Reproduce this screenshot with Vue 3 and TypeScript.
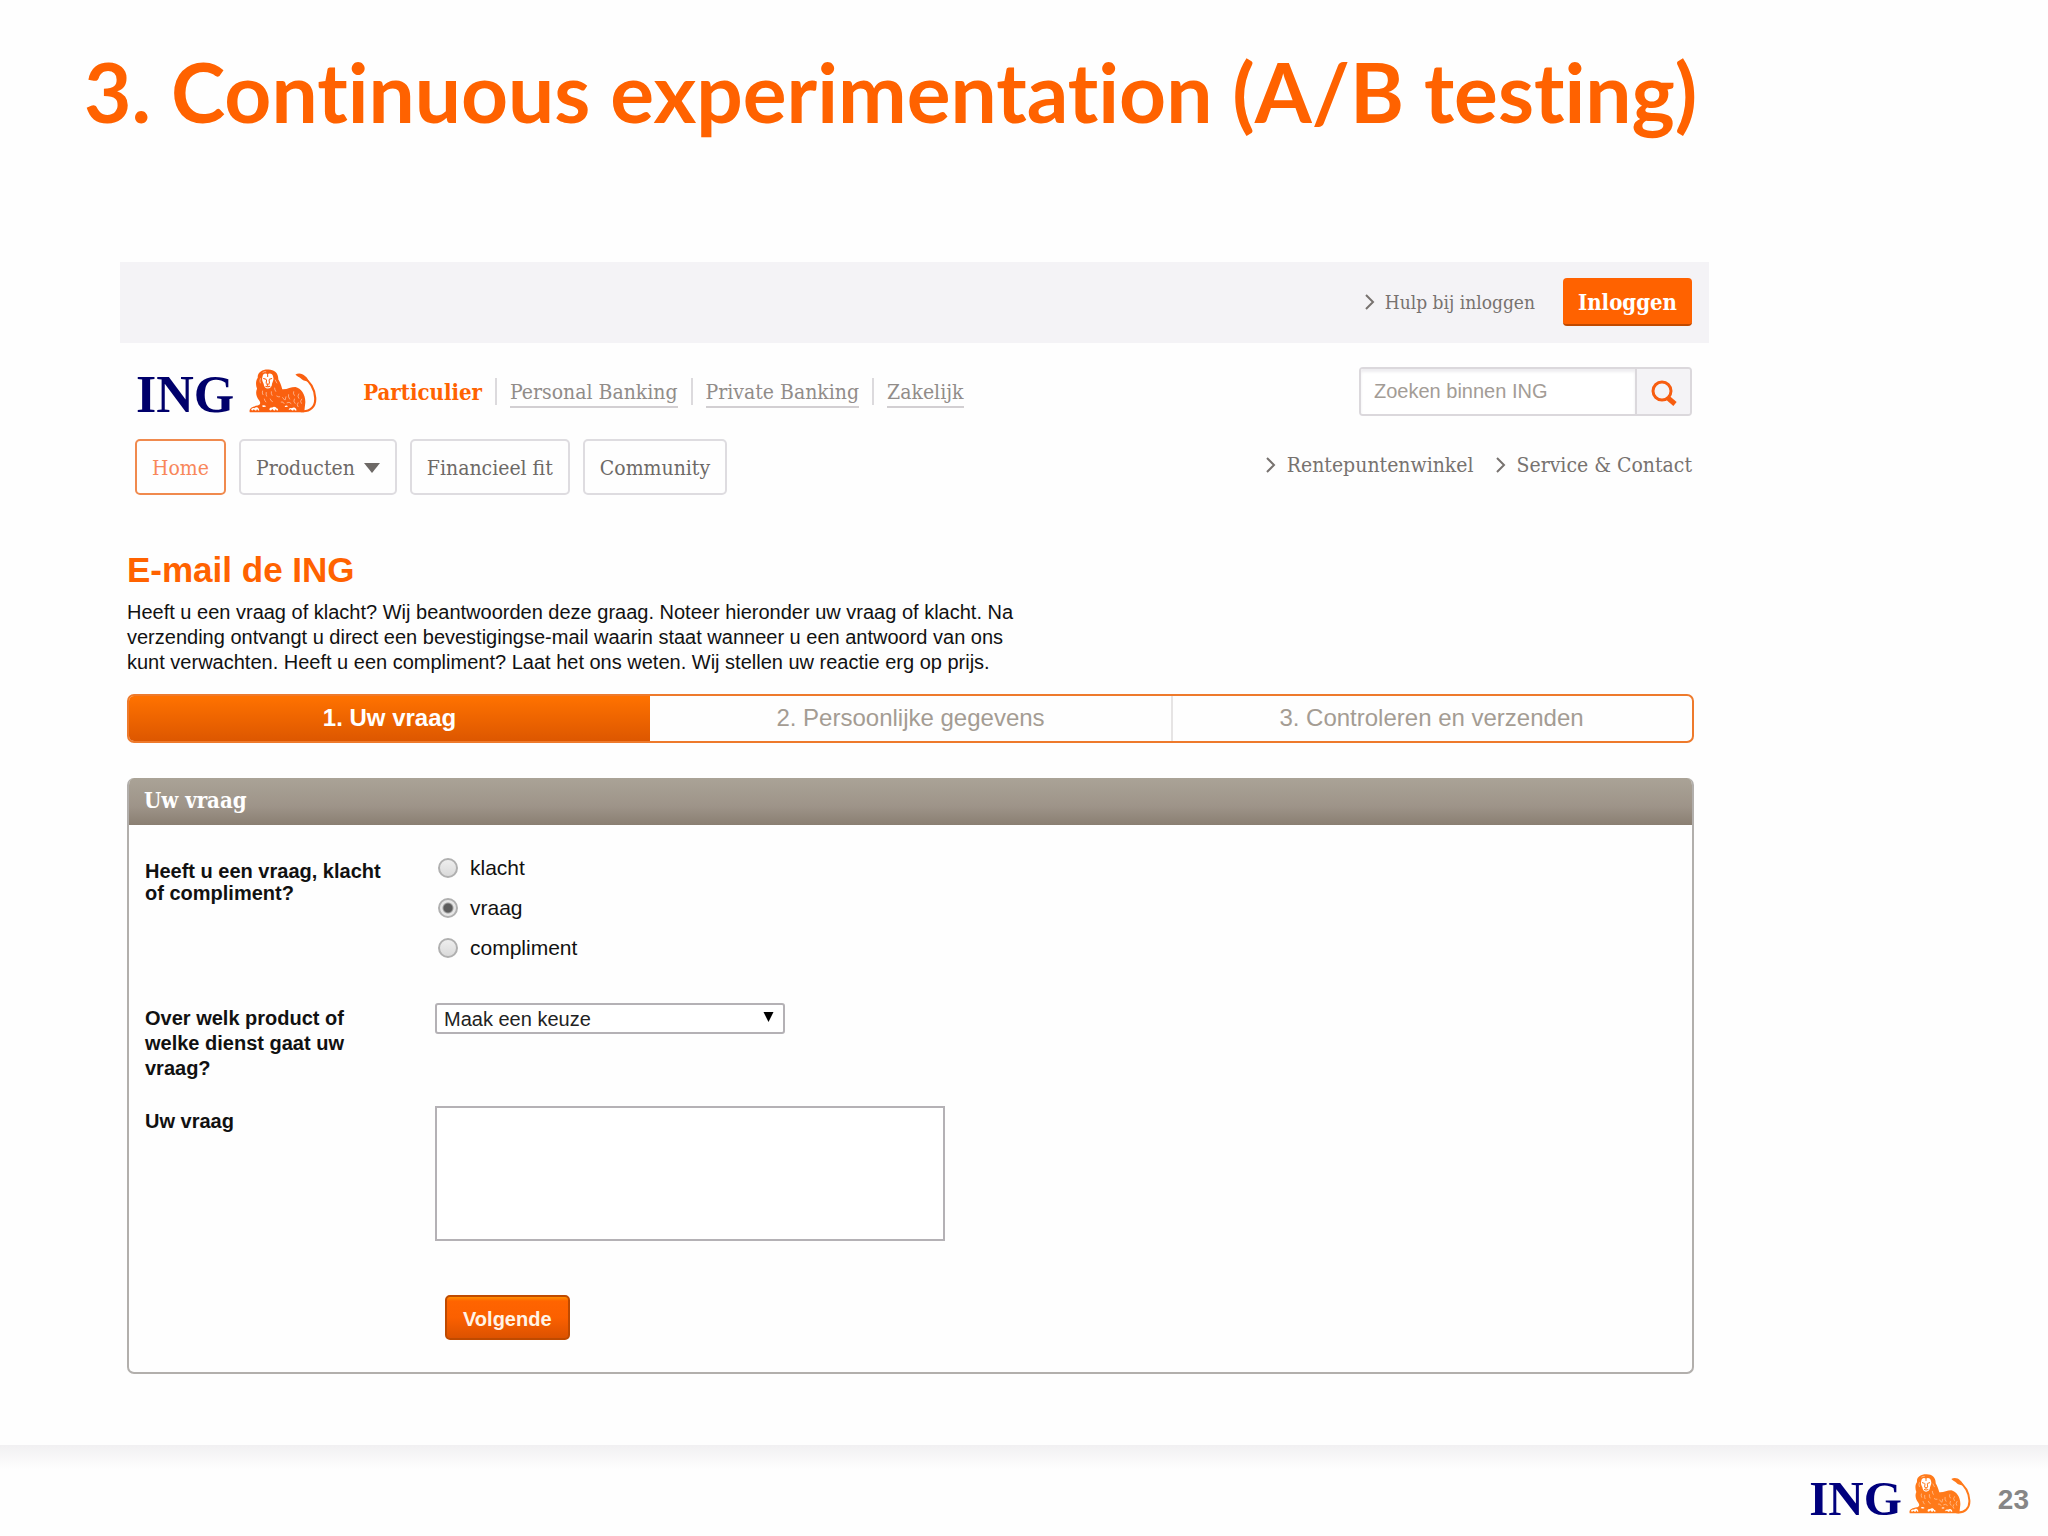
<script setup lang="ts">
import { ref } from 'vue'

interface Segment { label: string; active: boolean }

const segments: Segment[] = [
  { label: 'Particulier', active: true },
  { label: 'Personal Banking', active: false },
  { label: 'Private Banking', active: false },
  { label: 'Zakelijk', active: false },
]

const services: string[] = ['Rentepuntenwinkel', 'Service & Contact']
const steps: string[] = ['1. Uw vraag', '2. Persoonlijke gegevens', '3. Controleren en verzenden']
const kinds: string[] = ['klacht', 'vraag', 'compliment']

const kind = ref('vraag')
const product = ref('')
const question = ref('')
const search = ref('')
</script>

<template>
  <div class="slide">
    <svg class="sprite" aria-hidden="true">
      <symbol id="lion" viewBox="0 0 186 120">
        <path fill="currentColor" d="M24 24C22 8 38 0 53 1C70 1 81 12 80 28C85 36 88 44 91 55C104 56 114 49 127 49C143 53 155 70 154 92L151 118H2C-1 108 8 102 24 100C32 97 32 92 28 86C20 76 17 64 22 54C18 44 18 32 24 24Z" />
        <path fill="none" stroke="currentColor" stroke-width="6" d="M142 115C168 118 183 102 181 78C179 52 164 32 148 22" />
        <path fill="currentColor" d="M127 15C135 10 147 12 153 19C158 23 162 27 162 34C153 33 145 30 142 26C138 22 131 20 127 15Z" />
        <path fill="#fff" d="M37 20C38 12 45 10 51 14C57 10 65 13 66 21C69 28 65 34 63 40C63 48 58 53 51 53C45 53 41 48 40 40C37 34 34 27 37 20Z" />
        <g fill="none" stroke="currentColor" stroke-width="3" stroke-linecap="round">
          <path d="M40 26L46 28M56 28L62 26M48 30L47 38M55 30L56 38M48 41H55M51 41V45M46 47Q51 50 57 47M51 14V20" />
        </g>
        <g fill="none" stroke="#fff" stroke-opacity=".65" stroke-width="2" stroke-linecap="round">
          <path d="M31 26Q28 33 31 38M37 60Q35 66 38 70M47 64Q46 70 48 74M61 62Q60 68 63 72M70 52Q70 57 73 61M72 30Q74 35 76 38M38 9Q42 6 46 7M42 82Q43 87 46 90M58 82Q60 88 64 89M76 74Q80 77 84 76" />
          <path d="M92 78L97 84M101 76L99 84M108 70Q106 76 111 82M88 90Q94 88 96 94M104 92Q110 88 115 94M122 62Q120 68 124 72M136 68Q131 74 136 80M144 82Q138 88 143 94M124 82Q120 88 126 94M134 92Q129 98 134 103" />
        </g>
        <g fill="#fff">
          <path d="M6 112C6 107 11 105 15 107C18 103 25 104 27 109L28 113H25L22 109L20 113H17L13 110L10 113Z" />
          <path d="M56 112C55 107 59 104 63 106C67 101 74 103 76 108C80 107 80 111 79 113H76L73 109L71 113H68L64 109L60 113Z" />
          <path d="M109 112C108 107 113 105 117 107C121 103 127 105 129 109L130 113H126L123 109L121 113H118L114 110Z" />
          <path d="M36 100Q42 97 47 102Q42 105 37 103ZM98 101Q103 98 107 102Q102 105 98 103Z" />
        </g>
      </symbol>
      <symbol id="chevron" viewBox="0 0 10 16">
        <path fill="none" stroke="currentColor" stroke-width="2" d="M1 1L8 8L1 15" />
      </symbol>
    </svg>

    <h1 class="slide-title">3. Continuous experimentation (A/B testing)</h1>

    <main class="site">
      <div class="login-bar">
        <a class="arrow-link help" href="#"><svg class="chevron"><use href="#chevron" /></svg>Hulp bij inloggen</a>
        <button class="login" type="button">Inloggen</button>
      </div>

      <header class="brand-row">
        <a class="logo" href="#" aria-label="ING">
          <span class="logo-text">ING</span>
          <svg class="lion"><use href="#lion" /></svg>
        </a>
        <nav class="segments">
          <span v-for="s in segments" :key="s.label" class="segment">
            <a href="#" :class="{ active: s.active }">{{ s.label }}</a>
          </span>
        </nav>
        <form class="search" @submit.prevent>
          <input v-model="search" type="text" placeholder="Zoeken binnen ING" aria-label="Zoeken binnen ING">
          <button type="submit" aria-label="Zoeken">
            <svg viewBox="0 0 26 26">
              <circle cx="11" cy="11" r="9" fill="none" stroke="currentColor" stroke-width="3" />
              <path d="M17 18L24 24" fill="none" stroke="currentColor" stroke-width="5" />
            </svg>
          </button>
        </form>
      </header>

      <div class="menu-row">
        <nav class="menu">
          <a class="current" href="#">Home</a>
          <a href="#">Producten<svg class="caret" viewBox="0 0 16 10"><path d="M0 0H16L8 10Z" fill="currentColor" /></svg></a>
          <a href="#">Financieel fit</a>
          <a href="#">Community</a>
        </nav>
        <div class="services">
          <a v-for="s in services" :key="s" class="arrow-link" href="#"><svg class="chevron"><use href="#chevron" /></svg>{{ s }}</a>
        </div>
      </div>

      <section class="content">
        <h2>E-mail de ING</h2>
        <p class="intro">
          Heeft u een vraag of klacht? Wij beantwoorden deze graag. Noteer hieronder uw vraag of klacht. Na
          verzending ontvangt u direct een bevestigingse-mail waarin staat wanneer u een antwoord van ons
          kunt verwachten. Heeft u een compliment? Laat het ons weten. Wij stellen uw reactie erg op prijs.
        </p>

        <ol class="steps">
          <li v-for="(s, i) in steps" :key="s" :class="{ active: i === 0 }">{{ s }}</li>
        </ol>

        <form class="panel" @submit.prevent>
          <h3>Uw vraag</h3>
          <div class="fields">
            <span id="kind-label" class="label tight">Heeft u een vraag, klacht of compliment?</span>
            <div class="radios" role="radiogroup" aria-labelledby="kind-label">
              <label v-for="k in kinds" :key="k"><input v-model="kind" type="radio" name="kind" :value="k">{{ k }}</label>
            </div>

            <label class="label product-label" for="product">Over welk product of welke dienst gaat uw vraag?</label>
            <div class="select">
              <select id="product" v-model="product">
                <option value="">Maak een keuze</option>
              </select>
              <svg viewBox="0 0 10 10"><path d="M0 0H10L5 10Z" /></svg>
            </div>

            <label class="label" for="question">Uw vraag</label>
            <textarea id="question" v-model="question"></textarea>

            <button class="next" type="submit">Volgende</button>
          </div>
        </form>
      </section>
    </main>

    <footer class="slide-footer">
      <div class="logo small">
        <span class="logo-text">ING</span>
        <svg class="lion"><use href="#lion" /></svg>
      </div>
      <span class="page-number">23</span>
    </footer>
  </div>
</template>

<style>
body { margin: 0; background: #fefefe; }
</style>

<style scoped>
.slide {
  --orange: #ff6200;
  --slab: "DejaVu Serif Condensed", "DejaVu Serif", serif;
  display: flex;
  flex-direction: column;
  min-height: 100vh;
  font-family: "Liberation Sans", Arial, sans-serif;
  font-size: 20px;
  color: #111;
}
.slide *, .slide { box-sizing: border-box; }
.sprite { position: absolute; width: 0; height: 0; }
h1, h2, h3, p, ol { margin: 0; padding: 0; }
a { color: inherit; text-decoration: none; }
button, input, select, textarea { font: inherit; margin: 0; }

.slide-title {
  padding: 43px 84px 123px;
  font: 700 82px/96px Lato, sans-serif;
  font-variant-ligatures: none;
  color: var(--orange);
}
.site { flex: 1; margin: 0 339px 0 120px; }

.login-bar {
  display: flex;
  justify-content: flex-end;
  align-items: center;
  gap: 28px;
  height: 81px;
  padding: 0 17px 2px;
  background: #f4f3f6;
}
.arrow-link {
  display: inline-flex;
  align-items: center;
  gap: 11px;
  font: 21px/26px var(--slab);
  color: #77726f;
}
.arrow-link.help { font-size: 19px; gap: 10px; }
.chevron { width: 10px; height: 16px; }
.login {
  height: 48px;
  padding: 2px 15px 0;
  border: 0;
  border-bottom: 2px solid #c04a00;
  border-radius: 4px;
  background: var(--orange);
  color: #fff;
  font: 700 22px/40px var(--slab);
}

.brand-row {
  display: flex;
  height: 49px;
  margin: 24px 17px 23px 16px;
}
.logo { display: flex; align-items: flex-start; gap: 15px; }
.logo-text { font: 700 52px/56px "Liberation Serif", serif; color: #00006b; }
.lion { width: 68px; height: 44px; margin-top: 2px; color: #fa6010; }
.segments { display: flex; margin: 11px 0 0 46px; height: 30px; }
.segment + .segment { margin-left: 13px; padding-left: 13px; border-left: 2px solid #dcdadd; height: 27px; }
.segment a {
  display: block;
  height: 30px;
  border-bottom: 2px solid #d2cfd2;
  font: 21px/28px var(--slab);
  color: #918c89;
}
.segment a.active { border: 0; font-weight: 700; font-size: 22px; color: var(--orange); }
.search {
  display: flex;
  width: 333px;
  margin-left: auto;
  border: 2px solid #dbd8dc;
  border-radius: 4px;
  overflow: hidden;
}
.search input {
  flex: 1;
  min-width: 0;
  padding: 0 13px;
  border: 0;
  background: #fff;
  box-shadow: inset 0 3px 3px #eeedf0;
  outline: 0;
}
.search input::placeholder { color: #a39c96; opacity: 1; }
.search button {
  width: 55px;
  padding: 8px 0 0;
  border: 0;
  border-left: 2px solid #dbd8dc;
  background: #f4f3f6;
  color: #f75d10;
}
.search svg { width: 26px; height: 26px; }

.menu-row {
  display: flex;
  justify-content: space-between;
  align-items: flex-start;
  margin: 0 17px 0 15px;
}
.menu { display: flex; gap: 13px; }
.menu a {
  display: flex;
  align-items: center;
  gap: 9px;
  height: 56px;
  padding: 2px 15px 0;
  border: 2px solid #dedce0;
  border-radius: 5px;
  font: 21px/28px var(--slab);
  color: #6d6966;
}
.menu a.current { border-color: #f08a4e; color: #f8875a; }
.caret { width: 16px; height: 10px; }
.services { display: flex; gap: 22px; padding-top: 13px; }

.content { margin: 55px 15px 0 7px; }
h2 { font-size: 35px; line-height: 40px; color: var(--orange); }
.intro { max-width: 910px; margin-top: 10px; line-height: 25px; }

.steps {
  display: flex;
  height: 49px;
  margin-top: 19px;
  border: 2px solid #ee7a2c;
  border-radius: 7px;
  overflow: hidden;
  list-style: none;
  font-size: 24px;
  line-height: 44px;
  text-align: center;
  color: #a49c93;
}
.steps li { flex: 1; }
.steps li + li + li { box-shadow: inset 2px 0 #e6e4e4; }
.steps .active {
  background: linear-gradient(#ff7200, #dd5700);
  color: #fff;
  font-weight: 700;
}

.panel {
  margin-top: 35px;
  border: 2px solid #b2afac;
  border-top: 0;
  border-radius: 7px;
  overflow: hidden;
}
h3 {
  height: 47px;
  padding-left: 15px;
  background: linear-gradient(#aaa397, #9e9489 60%, #8a7f72);
  color: #fff;
  font: 700 22px/44px var(--slab);
}
.fields {
  display: grid;
  grid-template-columns: 290px 1fr;
  align-items: start;
  justify-items: start;
  padding: 23px 16px 32px;
}
.label { max-width: 250px; padding-top: 3px; font-weight: 700; line-height: 25px; }
.label.tight { padding-top: 12px; line-height: 22px; }
.radios { display: grid; grid-auto-rows: 40px; margin-bottom: 35px; }
.radios label { display: flex; align-items: center; gap: 12px; padding-left: 3px; font-size: 21px; }
.radios input {
  appearance: none;
  width: 20px;
  height: 20px;
  border: 2px solid #b0b0b0;
  border-radius: 50%;
  background: linear-gradient(#eee, #dadada);
}
.radios input:checked { background: radial-gradient(circle, #5c5c5c 0 4px, #e6e6e6 6px); }
.product-label { margin-bottom: 25px; }
.select { position: relative; width: 350px; height: 31px; }
.select select {
  appearance: none;
  width: 100%;
  height: 100%;
  padding: 0 7px;
  border: 2px solid #b4b1b5;
  border-radius: 3px;
  background: #fff;
  color: #222;
}
.select svg { position: absolute; right: 11px; top: 9px; width: 11px; height: 10px; }
textarea {
  width: 510px;
  height: 135px;
  border: 2px solid #b4b1b5;
  background: #fff;
  resize: none;
}
.next {
  grid-column: 2;
  height: 45px;
  margin: 54px 0 0 10px;
  padding: 3px 16px 0;
  border: 2px solid #bf4a00;
  border-radius: 5px;
  background: linear-gradient(#ff9000, #ff6400 4px, #fb6000 50%, #dc5200);
  color: #fff4e6;
  font-weight: 700;
}

.slide-footer {
  display: flex;
  justify-content: flex-end;
  align-items: flex-start;
  gap: 27px;
  height: 91px;
  padding: 27px 19px 0;
  background: linear-gradient(#f1f0f2, #fefefe 24px);
}
.logo.small { gap: 7px; }
.small .logo-text { font-size: 49px; line-height: 54px; color: #00007d; }
.small .lion { width: 62px; height: 40px; color: #ff7a1a; }
.page-number { margin-top: 12px; font-weight: 700; font-size: 28px; line-height: 32px; color: #868686; }
</style>
